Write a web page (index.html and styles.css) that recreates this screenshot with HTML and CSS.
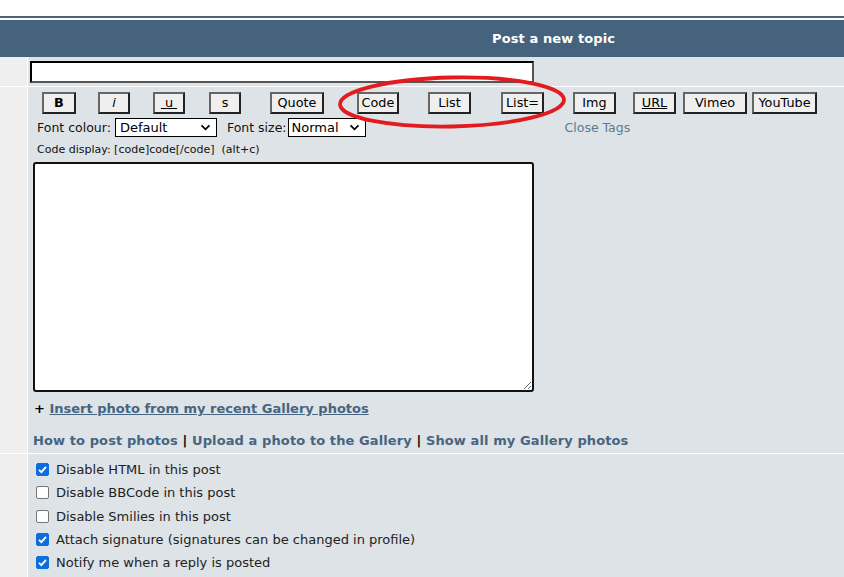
FILE: index.html
```html
<!DOCTYPE html>
<html>
<head>
<meta charset="utf-8">
<link rel="stylesheet" href="styles.css">
</head>
<body>
<div class="topgap"></div>
<div class="topline"></div>
<div class="header"><span class="title">Post a new topic</span></div>
<div class="row row-subject">
  <div class="side"></div>
  <div class="main"><input class="subject" type="text"></div>
</div>
<div class="row row-body">
  <div class="side"></div>
  <div class="main body-main">
    <div class="buttons">
      <button class="bb w-b g-first"><b>B</b></button>
      <button class="bb w-i g22"><i>i</i></button>
      <button class="bb w-u g23"><u>&nbsp;u&nbsp;</u></button>
      <button class="bb w-s g24">s</button>
      <button class="bb w-quote g29">Quote</button>
      <button class="bb w-code g33">Code</button>
      <button class="bb w-list g29">List</button>
      <button class="bb w-liste g30">List=</button>
      <button class="bb w-img g29">Img</button>
      <button class="bb w-url g17"><u>URL</u></button>
      <button class="bb w-vimeo g7">Vimeo</button>
      <button class="bb w-yt g5">YouTube</button>
    </div>
    <div class="fontrow">
      <span class="lbl">Font colour:</span>
      <span class="sel sel-colour">Default<svg class="chev" viewBox="0 0 12 8" width="11" height="7"><path d="M1.5 1.5 L6 6 L10.5 1.5" fill="none" stroke="#000" stroke-width="2"/></svg></span>
      <span class="lbl lbl-size">Font size:</span>
      <span class="sel sel-size">Normal<svg class="chev" viewBox="0 0 12 8" width="11" height="7"><path d="M1.5 1.5 L6 6 L10.5 1.5" fill="none" stroke="#000" stroke-width="2"/></svg></span>
      <span class="closetags">Close Tags</span>
    </div>
    <div class="codehelp">Code display: [code]code[/code]&nbsp; (alt+c)</div>
    <textarea class="msg"></textarea>
    <div class="insert"><span class="plus">+</span> <a class="lnk ul">Insert photo from my recent Gallery photos</a></div>
    <div class="photolinks"><a class="lnk">How to post photos</a> <span class="sep">|</span> <a class="lnk">Upload a photo to the Gallery</a> <span class="sep">|</span> <a class="lnk">Show all my Gallery photos</a></div>
    <svg class="ring" width="236" height="60" viewBox="0 0 236 60"><ellipse cx="118" cy="30" rx="112" ry="24.5" fill="none" stroke="#e31b1f" stroke-width="3.8" transform="rotate(-1.2 118 30)"/></svg>
  </div>
</div>
<div class="row row-opts">
  <div class="side"></div>
  <div class="main opts">
    <label class="opt"><span class="cb on"><svg viewBox="0 0 13 13" width="13" height="13"><path d="M3 6.8 L5.4 9.2 L10 3.8" fill="none" stroke="#fff" stroke-width="1.9"/></svg></span>Disable HTML in this post</label>
    <label class="opt"><span class="cb"></span>Disable BBCode in this post</label>
    <label class="opt"><span class="cb"></span>Disable Smilies in this post</label>
    <label class="opt"><span class="cb on"><svg viewBox="0 0 13 13" width="13" height="13"><path d="M3 6.8 L5.4 9.2 L10 3.8" fill="none" stroke="#fff" stroke-width="1.9"/></svg></span>Attach signature (signatures can be changed in profile)</label>
    <label class="opt"><span class="cb on"><svg viewBox="0 0 13 13" width="13" height="13"><path d="M3 6.8 L5.4 9.2 L10 3.8" fill="none" stroke="#fff" stroke-width="1.9"/></svg></span>Notify me when a reply is posted</label>
  </div>
</div>
</body>
</html>
```
FILE: styles.css
```css
html, body { margin: 0; padding: 0; background: #fff; }
body { font-family: "DejaVu Sans", Verdana, sans-serif; font-size: 13px; color: #111; width: 844px; overflow: hidden; height: 577px; }
.topgap { height: 16px; }
.topline { height: 2px; background: #45627a; margin-bottom: 2px; }
.header { height: 37px; background: #45637c; color: #fff; display: flex; align-items: center; padding-left: 492px; box-sizing: border-box; }
.title { font-weight: bold; font-size: 13px; letter-spacing: 0.1px; }
.row { display: grid; grid-template-columns: 27px 1fr; column-gap: 1px; background: #fff; border-bottom: 1px solid #fff; overflow: hidden; }
.side { background: #efefef; }
.main { background: #dee3e7; position: relative; }
.row-subject { height: 29px; }
.row-subject .main { padding: 4px 0 0 2px; box-sizing: border-box; }
.subject { display: block; width: 504px; height: 22px; box-sizing: border-box; margin: 0; border: 2px solid; border-color: #000 #555 #555 #000; background: #fff; padding: 0; }
.row-body { height: 366px; overflow: visible; }
.body-main { padding: 5px 0 0 0; box-sizing: border-box; }
.buttons { display: flex; height: 22px; }
.bb { height: 22px; box-sizing: border-box; margin: 0; padding: 0; border: 2px solid; border-color: #666 #222 #222 #666; background: #efefef; font-family: "DejaVu Sans", Verdana, sans-serif; font-size: 12.8px; color: #000; display: flex; align-items: center; justify-content: center; line-height: 1; }
.bb i { font-style: italic; }
.w-b { width: 34px; } .w-i { width: 32px; } .w-u { width: 32px; } .w-s { width: 32px; }
.w-quote { width: 54px; } .w-code { width: 42px; } .w-list { width: 43px; } .w-liste { width: 43px; }
.w-img { width: 43px; } .w-url { width: 43px; } .w-vimeo { width: 64px; } .w-yt { width: 65px; }
.g-first { margin-left: 14px; }
.g22 { margin-left: 22px; } .g23 { margin-left: 23px; } .g24 { margin-left: 24px; } .g29 { margin-left: 29px; }
.g33 { margin-left: 33px; } .g30 { margin-left: 30px; } .g17 { margin-left: 17px; } .g7 { margin-left: 7px; } .g5 { margin-left: 5px; }
.fontrow { display: flex; align-items: center; height: 19px; margin-top: 4px; padding-left: 9px; font-size: 12.5px; }
.lbl { color: #111; }
.sel { display: flex; align-items: center; justify-content: space-between; height: 19px; box-sizing: border-box; border: 1px solid #000; background: #fff; padding: 0 5px 0 4px; font-size: 13px; color: #000; }
.sel-colour { width: 102px; margin-left: 4px; }
.lbl-size { margin-left: 10px; }
.sel-size { width: 78px; margin-left: 1px; padding-left: 3px; }
.closetags { color: #5a7a95; font-size: 12.5px; margin-left: 199px; }
.codehelp { font-size: 11px; margin-top: 5px; padding-left: 9px; height: 16px; line-height: 16px; color: #111; }
.msg { display: block; width: 501px; height: 230px; margin: 4px 0 0 5px; box-sizing: border-box; border: 2px solid #111; border-radius: 3px; background: #fff; resize: both; padding: 0; }
.insert { margin-top: 9px; padding-left: 6px; font-size: 13px; font-weight: bold; height: 16px; line-height: 16px; }
.plus { color: #000; }
.lnk { color: #466580; font-weight: bold; text-decoration: none; }
.lnk.ul { text-decoration: underline; }
.photolinks { margin-top: 16px; padding-left: 5px; font-size: 13px; font-weight: bold; height: 16px; line-height: 16px; letter-spacing: 0.1px; }
.sep { color: #000; }
.ring { position: absolute; left: 306px; top: -15px; }
.row-opts { height: 125px; border-bottom: 0; }
.opts { padding: 4px 0 0 8px; box-sizing: border-box; display: flex; flex-direction: column; }
.opt { display: flex; align-items: center; height: 23.25px; font-size: 13px; color: #222; }
.cb { width: 13px; height: 13px; box-sizing: border-box; border: 1px solid #767676; border-radius: 2px; background: #fff; margin-right: 7px; display: flex; }
.cb.on { background: #0b6dde; border-color: #0b6dde; }
.cb.on svg { margin: -1px; }
```
